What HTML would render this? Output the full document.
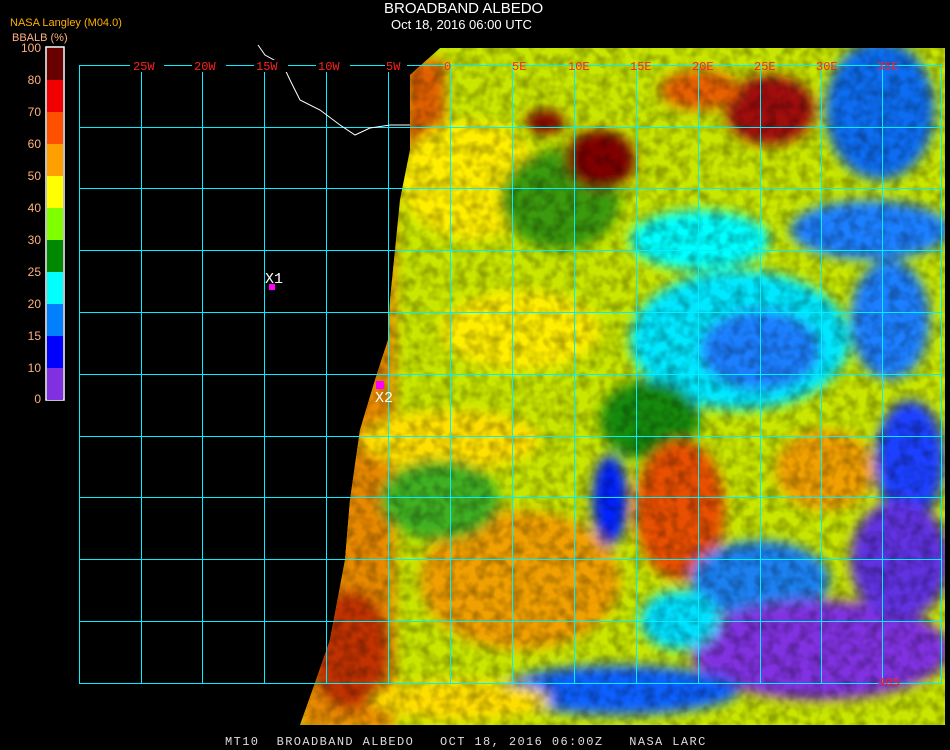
<!DOCTYPE html>
<html><head><meta charset="utf-8"><style>
html,body{margin:0;padding:0;background:#000;width:950px;height:750px;overflow:hidden}
body{position:relative;font-family:"Liberation Sans",sans-serif}
.t{position:absolute;color:#fff;white-space:pre}
</style></head><body>
<svg width="950" height="750" style="position:absolute;left:0;top:0">
<defs>
<clipPath id="c"><polygon points="410,75 440,48 945,48 945,725 300,725 315,683 330,640 345,560 350,500 360,430 375,380 388,340 390,300 395,250 400,200 410,150 410,75"/></clipPath>
<filter id="n" x="0" y="0" width="100%" height="100%">
<feTurbulence type="fractalNoise" baseFrequency="0.09" numOctaves="2" seed="3"/>
<feColorMatrix type="matrix" values="0 0 0 0 0  0 0 0 0 0  0 0 0 0 0  0 0 0 -2.2 1.4"/>
</filter>
<filter id="b"><feGaussianBlur stdDeviation="6"/></filter>
</defs>
<g clip-path="url(#c)">
<rect x="290" y="40" width="660" height="690" fill="#c8e600"/>
<g filter="url(#b)">
<rect x="300" y="40" width="95" height="690" fill="#e88a00"/>
<rect x="405" y="60" width="40" height="120" fill="#e06000"/>
<ellipse cx="350" cy="650" rx="40" ry="60" fill="#c03000"/>
<ellipse cx="470" cy="180" rx="70" ry="60" fill="#ffee00"/>
<ellipse cx="520" cy="330" rx="80" ry="40" fill="#ffee00"/>
<ellipse cx="560" cy="200" rx="60" ry="50" fill="#3a9a10"/>
<ellipse cx="600" cy="160" rx="35" ry="30" fill="#800000"/>
<ellipse cx="545" cy="122" rx="20" ry="12" fill="#800000"/>
<ellipse cx="770" cy="110" rx="45" ry="35" fill="#a01010"/>
<ellipse cx="700" cy="90" rx="40" ry="20" fill="#e86000"/>
<ellipse cx="880" cy="110" rx="55" ry="70" fill="#0a6cf0"/>
<ellipse cx="870" cy="230" rx="80" ry="30" fill="#1e7fff"/>
<ellipse cx="700" cy="240" rx="70" ry="30" fill="#00ffff"/>
<ellipse cx="740" cy="340" rx="110" ry="70" fill="#00e8ff"/>
<ellipse cx="760" cy="350" rx="60" ry="40" fill="#1e7fff"/>
<ellipse cx="890" cy="320" rx="40" ry="60" fill="#1e7fff"/>
<ellipse cx="650" cy="420" rx="50" ry="40" fill="#128a10"/>
<ellipse cx="680" cy="510" rx="45" ry="70" fill="#e85000"/>
<ellipse cx="825" cy="470" rx="50" ry="40" fill="#f0a000"/>
<ellipse cx="910" cy="460" rx="35" ry="60" fill="#1e40ff"/>
<ellipse cx="610" cy="500" rx="18" ry="45" fill="#0020ff"/>
<ellipse cx="520" cy="580" rx="100" ry="70" fill="#f0a000"/>
<ellipse cx="450" cy="440" rx="90" ry="30" fill="#ffe000"/>
<ellipse cx="440" cy="500" rx="60" ry="40" fill="#40b020"/>
<ellipse cx="760" cy="580" rx="70" ry="40" fill="#1e80f0"/>
<ellipse cx="820" cy="650" rx="130" ry="50" fill="#8030e0"/>
<ellipse cx="900" cy="560" rx="50" ry="60" fill="#6030e0"/>
<ellipse cx="620" cy="690" rx="120" ry="25" fill="#1060ff"/>
<ellipse cx="460" cy="700" rx="90" ry="20" fill="#ffdd00"/>
<ellipse cx="680" cy="620" rx="40" ry="30" fill="#00e0ff"/>
</g>
<rect x="290" y="40" width="660" height="690" filter="url(#n)" opacity="0.28"/>
</g>
<g stroke="#00f0ff" stroke-width="1" fill="none">
<rect x="79.5" y="65.5" width="862" height="618"/>
<path d="M141.5 65V683M202.5 65V683M264.5 65V683M326.5 65V683M388.5 65V683M450.5 65V683M512.5 65V683M574.5 65V683M636.5 65V683M698.5 65V683M760.5 65V683M821.5 65V683M882.5 65V683M79 127.5H941M79 188.5H941M79 250.5H941M79 312.5H941M79 374.5H941M79 436.5H941M79 497.5H941M79 559.5H941M79 621.5H941"/>
</g>
<path d="M258 45 L265 55 L283 65 L290 80 L300 100 L320 110 L340 125 L355 135 L370 128 L390 125 L410 125" stroke="#fff" fill="none" stroke-width="1"/>
<g font-family="Liberation Mono,monospace" font-size="12" fill="#ff2020">
<rect x="130" y="60" width="34" height="12" fill="#000"/><text x="133" y="70">25W</text>
<rect x="192" y="60" width="34" height="12" fill="#000"/><text x="194" y="70">20W</text>
<rect x="254" y="60" width="34" height="12" fill="#000"/><text x="256" y="70">15W</text>
<rect x="316" y="60" width="34" height="12" fill="#000"/><text x="318" y="70">10W</text>
<rect x="385" y="60" width="22" height="12" fill="#000"/><text x="386" y="70">5W</text>
<text x="444" y="70">0</text><text x="512" y="70">5E</text><text x="568" y="70">10E</text><text x="630" y="70">15E</text><text x="692" y="70">20E</text><text x="754" y="70">25E</text><text x="816" y="70">30E</text><text x="877" y="70">35E</text>
<text x="878" y="686">40S</text>
</g>
<rect x="269" y="284" width="6" height="6" fill="#ff00ff"/>
<rect x="376" y="381" width="8" height="8" fill="#ff00ff"/>
<g font-family="Liberation Mono,monospace" font-size="15" fill="#fff">
<text x="265" y="283">X1</text><text x="375" y="402">X2</text>
</g>
<rect x="46" y="47" width="18" height="353" fill="none" stroke="#fff" stroke-width="1.5"/>
<rect x="47" y="48" width="16" height="32" fill="#680000"/>
<rect x="47" y="80" width="16" height="32" fill="#f00000"/>
<rect x="47" y="112" width="16" height="32" fill="#ff5000"/>
<rect x="47" y="144" width="16" height="32" fill="#ffa000"/>
<rect x="47" y="176" width="16" height="32" fill="#ffff00"/>
<rect x="47" y="208" width="16" height="32" fill="#80ff00"/>
<rect x="47" y="240" width="16" height="32" fill="#008800"/>
<rect x="47" y="272" width="16" height="32" fill="#00ffff"/>
<rect x="47" y="304" width="16" height="32" fill="#0080ff"/>
<rect x="47" y="336" width="16" height="32" fill="#0000ff"/>
<rect x="47" y="368" width="16" height="32" fill="#8030e0"/>
<g font-size="12" fill="#ffb080" text-anchor="end" font-family="Liberation Sans,sans-serif">
<text x="41" y="52">100</text><text x="41" y="84">80</text><text x="41" y="116">70</text><text x="41" y="148">60</text><text x="41" y="180">50</text><text x="41" y="212">40</text><text x="41" y="244">30</text><text x="41" y="276">25</text><text x="41" y="308">20</text><text x="41" y="340">15</text><text x="41" y="372">10</text><text x="41" y="403">0</text>
</g>
</svg>
<div class="t" style="left:10px;top:17px;font-size:11px;color:#ffb000">NASA Langley (M04.0)</div>
<div class="t" style="left:12px;top:32px;font-size:11px;color:#ffb080">BBALB (%)</div>
<div class="t" style="left:384px;top:0px;font-size:15px">BROADBAND ALBEDO</div>
<div class="t" style="left:391px;top:17px;font-size:13px">Oct 18, 2016 06:00 UTC</div>
<div class="t" style="left:225px;top:735px;font-size:12px;font-family:'Liberation Mono',monospace;color:#ddd;letter-spacing:1.4px">MT10  BROADBAND ALBEDO   OCT 18, 2016 06:00Z   NASA LARC</div>
</body></html>
